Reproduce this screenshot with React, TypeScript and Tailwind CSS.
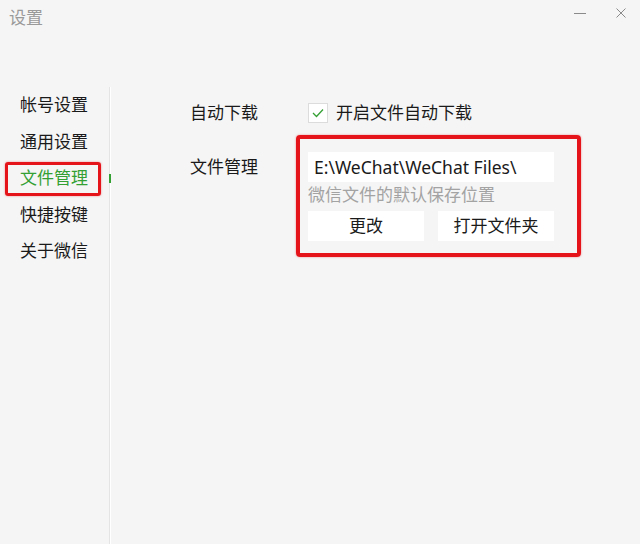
import React from 'react';

const font = { fontFamily: '"Noto Sans", "Noto Sans CJK SC", sans-serif' };

const navItems = ['帐号设置', '通用设置', '文件管理', '快捷按键', '关于微信'];

export default function App() {
  return (
    <div className="w-[640px] h-[544px] bg-[#f5f5f5] flex flex-col overflow-hidden" style={font}>
      {/* title bar */}
      <div className="h-[87px] flex items-start justify-between shrink-0">
        <div className="pl-[9px] pt-[5px] text-[17px] leading-[26px] text-[#9a9a9a]">设置</div>
        <div className="flex items-start pt-[8px] pr-[14px] gap-[30px]">
          <div className="w-[12px] h-[10px] flex items-center">
            <div className="w-[12px] h-[1px] bg-[#8a8a8a]" />
          </div>
          <svg width="10" height="10" viewBox="0 0 10 10">
            <path d="M0.5 0.5L9.5 9.5M9.5 0.5L0.5 9.5" stroke="#8a8a8a" strokeWidth="1" />
          </svg>
        </div>
      </div>

      <div className="flex flex-1">
        {/* sidebar */}
        <div className="w-[110px] shrink-0 flex flex-col border-r border-[#e4e4e4] shadow-[1px_0_0_#ffffff]">
          {navItems.map((item) => {
            const active = item === '文件管理';
            return (
              <div key={item} className="relative h-[36.4px] flex items-center pl-[20px]">
                <span className={`text-[17px] ${active ? 'text-[#34a034]' : 'text-[#1a1a1a]'}`}>{item}</span>
                {active && (
                  <>
                    <div className="absolute left-[5px] top-[2px] w-[96px] h-[34px] border-[3px] border-[#e5141b] rounded-[3px] shadow-[0_0_2px_rgba(229,20,27,0.5)]" />
                    <div className="absolute right-[-2px] top-[14px] w-[2px] h-[9px] bg-[#34a034]" />
                  </>
                )}
              </div>
            );
          })}
        </div>

        {/* content */}
        <div className="flex-1 flex flex-col pl-[80px] pt-[16px]">
          <div className="flex items-center h-[20px]">
            <div className="w-[118px] text-[17px] text-[#1a1a1a]">自动下载</div>
            <div className="w-[20px] h-[20px] bg-white border border-[#dcdcdc] flex items-center justify-center">
              <svg width="12" height="10" viewBox="0 0 12 10">
                <path d="M1 5L4.5 8.5L11 1.5" fill="none" stroke="#34a034" strokeWidth="1.3" />
              </svg>
            </div>
            <span className="ml-[8px] text-[17px] text-[#1a1a1a]">开启文件自动下载</span>
          </div>

          <div className="flex mt-[29px]">
            <div className="w-[118px] h-[30px] flex items-center text-[17px] text-[#1a1a1a]">文件管理</div>
            <div className="relative w-[246px] flex flex-col">
              <div className="h-[30px] bg-white flex items-center pl-[6px] text-[17.5px] text-[#1a1a1a]">
                E:\WeChat\WeChat Files\
              </div>
              <div className="text-[17px] leading-[26px] text-[#a3a3a3]">微信文件的默认保存位置</div>
              <div className="flex justify-between mt-[3px]">
                <button className="w-[116px] h-[30px] bg-white text-[17px] text-[#1a1a1a]">更改</button>
                <button className="w-[116px] h-[30px] bg-white text-[17px] text-[#1a1a1a]">打开文件夹</button>
              </div>
              <div className="absolute left-[-12px] top-[-17px] w-[285px] h-[122px] border-[4px] border-[#e5141b] rounded-[4px] shadow-[0_0_2px_rgba(229,20,27,0.5)]" />
            </div>
          </div>
        </div>
      </div>
    </div>
  );
}
